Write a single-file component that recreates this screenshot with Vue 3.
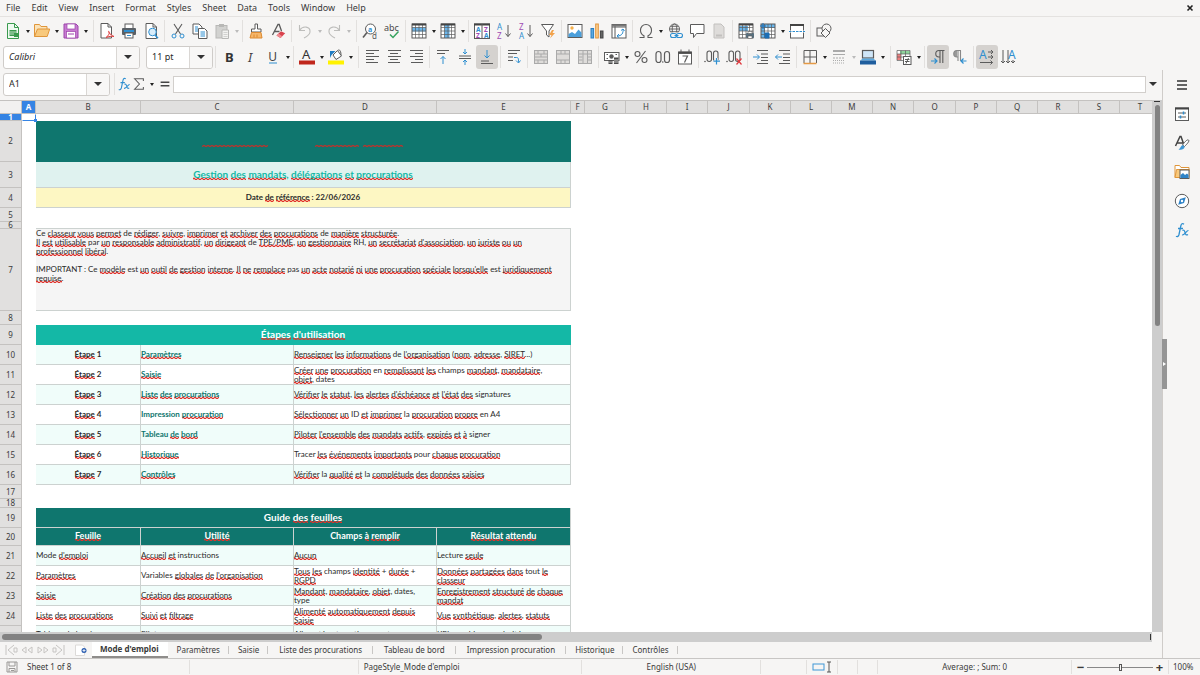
<script setup>
import { ref } from 'vue'

const menus = ['File', 'Edit', 'View', 'Insert', 'Format', 'Styles', 'Sheet', 'Data', 'Tools', 'Window', 'Help']

const G = '#5b5b5b'
const B = '#2f8fd0'
const doc = `<path d="M3 .5h7l3.500 3.500v11.500H3z" fill="#fff" stroke="${G}"/><path d="M10 .5v3.500h3.500" fill="none" stroke="${G}"/>`
const lines = (w, x) => w.map((v, i) => `<path d="M${x[i]} ${1.5 + i * 3}h${v}" stroke="${G}"/>`).join('')
const grid = (c) => `<path d="M1 4.500h14M1 8h14M1 11.500h14M4.500 1v14M8 1v14M11.500 1v14" stroke="${c}" stroke-width=".7" fill="none"/><rect x="1" y="1" width="14" height="14" fill="none" stroke="${c}"/>`

const icons = {
  new: `<path d="M2.500 .5h7l4 4v11h-11z" fill="#eefaf0" stroke="#3a9a4e"/><path d="M9.500 .5v4h4" fill="none" stroke="#3a9a4e"/><rect x="4.500" y="7" width="7" height="6" fill="#3a9a4e"/><path d="M4.500 9h7M4.500 11h7" stroke="#fff" stroke-width=".7"/><rect x="9" y="10" width="5" height="4" fill="#3a9a4e"/>`,
  open: `<path d="M.5 13.500v-12h5l1.500 2h6v3" fill="#fbe3b8" stroke="#e0963a"/><path d="M.5 13.500L3.500 6h12.200l-2.500 7.500z" fill="#f8c97c" stroke="#e0963a"/>`,
  save: `<path d="M1 1h12l2 2v12H1z" fill="#c77bd1" stroke="#9c44aa"/><rect x="4" y="1" width="8" height="5" fill="#fff" stroke="#9c44aa" stroke-width=".7"/><rect x="3.500" y="8.500" width="9" height="6.500" fill="#fff" stroke="#9c44aa" stroke-width=".7"/><path d="M5 11h6" stroke="#9c44aa"/>`,
  pdf: `<path d="M2 .5h7l3.500 3.500v11H2z" fill="#fff" stroke="${G}"/><path d="M9 .5v3.500h3.500" fill="none" stroke="${G}"/><path d="M7 14.500c3-2 4-5 3-6s-1 2 5 5c-3-.6-5 0-8 1z" fill="#fff" stroke="#dd3f3f"/>`,
  print: `<rect x="4" y="1" width="8" height="5" fill="#fff" stroke="${G}"/><rect x="1" y="5" width="14" height="7" rx="1" fill="#5a6066"/><path d="M3 8h10" stroke="${B}" stroke-width="2"/><rect x="4" y="10" width="8" height="5" fill="#fff" stroke="${G}"/><path d="M6 12.500h4" stroke="${B}"/>`,
  preview: doc + `<circle cx="9.500" cy="9" r="3.800" fill="#d9edfa" stroke="${B}"/><path d="M12 12l3 3.300" stroke="${B}" stroke-width="1.500"/>`,
  cut: `<path d="M4 1l6.500 10M12 1L5.500 11" stroke="${G}" stroke-width="1.100"/><circle cx="4" cy="13" r="2" fill="none" stroke="${B}"/><circle cx="12" cy="13" r="2" fill="none" stroke="${B}"/>`,
  copy: `<path d="M1 1h6l3 3v7H1z" fill="#fff" stroke="${G}"/><path d="M3 4h3M3 6h3M3 8h3" stroke="${B}"/><path d="M6.500 5.500h6l2.500 2.500v7.500H6.500z" fill="#fff" stroke="${G}"/><path d="M8.500 9h4.500M8.500 11h4.500M8.500 13h4.500" stroke="${B}"/>`,
  paste: `<rect x="2" y="2.500" width="11" height="12.500" fill="#d2d2d0" stroke="#b8b8b6"/><rect x="5" y="1" width="5" height="3" fill="#b8b8b6"/><path d="M8 7h6.500v8.500H8z" fill="#f2f2f0" stroke="#b8b8b6"/><path d="M9.500 9.500h4M9.500 11.500h4M9.500 13.500h4" stroke="#c4c4c2" stroke-width=".7"/>`,
  clone: `<path d="M7 1h2.500v5H13v3H3.500V6H7z" fill="#fff" stroke="${G}"/><path d="M3.500 9.500h9.500l1 5.500h-12z" fill="#f6b66a" stroke="#dc8a31"/><path d="M6 11.500v3M9 11.500v3" stroke="#dc8a31"/>`,
  clear: `<path d="M2.500 12L8 1.500h1.200L11.500 8M4.500 8.500h5" stroke="${G}" stroke-width="1.300" fill="none"/><path d="M6.500 12.500l4.500-4.200 4.200 2-4.700 4.700z" fill="#d9424d"/><path d="M6.500 12.500l2-1.900 3.700 2.700-1.700 1.700z" fill="#f08a90"/>`,
  undo: `<path d="M2.500 2v5.500H8M2.500 7.500C6 2 13.500 3.500 13 9c-.3 3-3 4.500-6 6" fill="none" stroke="#bdbdbb" stroke-width="1.100"/>`,
  redo: `<path d="M13.500 2v5.500H8M13.500 7.500C10 2 2.500 3.500 3 9c.3 3 3 4.500 6 6" fill="none" stroke="#bdbdbb" stroke-width="1.100"/>`,
  find: `<circle cx="8.500" cy="6" r="5" fill="#fff" stroke="${G}"/><path d="M5 9.500L1 14.500" stroke="${G}" stroke-width="1.600"/><text x="6" y="8.500" font-size="7" font-weight="bold" fill="${B}">a</text><text x="10" y="15.500" font-size="8" fill="${G}">d</text>`,
  spell: `<text x="0" y="7.500" font-size="9" fill="#4a4a4a">abc</text><path d="M6 11.500l3 3 5.500-6" fill="none" stroke="#36a35f" stroke-width="1.500"/>`,
  row: `<rect x="1" y="1" width="14" height="14" fill="#fff"/><rect x="1" y="4.500" width="14" height="4" fill="#6ab6ec"/>` + grid(G) + `<path d="M1 1.500h14" stroke="#444" stroke-width="2"/>`,
  col: `<rect x="1" y="1" width="14" height="14" fill="#fff"/><rect x="4.500" y="1" width="5" height="14" fill="#6ab6ec"/>` + grid(G) + `<path d="M1 1.500h14" stroke="#444" stroke-width="2"/>`,
  sort: `<rect x=".5" y="1" width="15" height="14.500" fill="#fff" stroke="${G}"/><path d="M0 1.500h16" stroke="#444" stroke-width="2"/><path d="M8 1v14.500" stroke="${G}"/><g font-size="6.500" font-weight="bold"><text x="2" y="9" fill="${B}">A</text><text x="2" y="15" fill="#a04cb3">Z</text><text x="10" y="9" fill="#a04cb3">Z</text><text x="10" y="15" fill="${B}">A</text></g>`,
  asc: `<g font-size="8"><text x="1" y="7" fill="${B}">A</text><text x="1" y="15.500" fill="#a04cb3">Z</text></g><path d="M12 2v11.500M9.500 10.500L12 13.500l2.500-3" fill="none" stroke="${G}"/>`,
  desc: `<g font-size="8"><text x="1" y="7" fill="#a04cb3">Z</text><text x="1" y="15.500" fill="${B}">A</text></g><path d="M12 2v11.500M9.500 10.500L12 13.500l2.500-3" fill="none" stroke="${G}"/>`,
  filter: `<path d="M1.500 1.500h12L9 8v6L6.500 12V8z" fill="#fff" stroke="${G}"/><path d="M12 7l-3 5h2.500L10 15.500l5-5.500h-2.500L14 7z" fill="#f2a24a"/>`,
  image: `<rect x="1" y="1.500" width="14" height="13" fill="#fff" stroke="${G}"/><circle cx="5" cy="5" r="1.700" fill="#f5b04d"/><path d="M1.500 14v-3l3.500-2 3 2 3.500-4.500 3 3V14z" fill="#4a9fdb"/>`,
  chart: `<rect x="2" y="5.500" width="2.600" height="9.500" fill="#5ba9e0" stroke="#2b7fc0"/><rect x="6.700" y="1" width="2.600" height="14" fill="#fbcf94" stroke="#e2943a"/><rect x="11.400" y="8" width="2.600" height="7" fill="#666" stroke="#444"/>`,
  pivot: `<rect x="1" y="1.500" width="14" height="13.500" fill="#fff" stroke="${G}"/><path d="M1 4h14M4 1.500V15" stroke="${G}"/><path d="M1 2.500h14" stroke="#777" stroke-width="2"/><path d="M6 13c5 0 6.500-3 6-7M6 13l2-2M6 13l2 1.500M12 6l-2 1.500M12 6l1.500 2" fill="none" stroke="${B}"/>`,
  omega: `<path d="M1.500 14.500H6v-1.700C3.500 11.500 2.500 9.500 2.500 7.200 2.500 4 4.800 1.500 8 1.500s5.500 2.500 5.500 5.700c0 2.300-1 4.300-3.500 5.600v1.700h4.500" fill="none" stroke="${G}" stroke-width="1.100"/>`,
  link: `<g fill="none" stroke="${G}" stroke-width=".9"><circle cx="7.500" cy="6" r="5"/><ellipse cx="7.500" cy="6" rx="2.300" ry="5"/><path d="M2.500 6h10M3.500 3.300h8M3.500 8.700h8"/></g><rect x="3" y="9.500" width="13" height="6" fill="#f6f5f4"/><g fill="none" stroke="${B}" stroke-width="1.100"><rect x="3.500" y="10.500" width="6" height="4" rx="2"/><rect x="9.500" y="10.500" width="6" height="4" rx="2"/><path d="M7.500 12.500h4"/></g>`,
  comment: `<path d="M1.500 1.500h13.500v9H7.500L4.500 14.500v-4h-3z" fill="#fff" stroke="${G}"/>`,
  header: `<path d="M3 1h7l3 3v11H3z" fill="#dedcda" stroke="#c2c0be"/><path d="M5 11.500h6v2H5z" fill="#c2c0be"/>`,
  printarea: `<rect x="1" y="1" width="14" height="14" fill="#fff"/><rect x="1" y="3" width="9" height="5" fill="#6ab6ec"/>` + grid(G) + `<path d="M1 1.500h14" stroke="#444" stroke-width="2"/><rect x="8" y="10" width="8" height="5" rx="1" fill="#59707f"/><rect x="10" y="8.500" width="4" height="2" fill="#fff" stroke="${G}" stroke-width=".6"/><rect x="10" y="13" width="4" height="2.500" fill="#fff" stroke="${G}" stroke-width=".6"/>`,
  freeze: `<rect x="1" y="1" width="14" height="14" fill="#fff"/><rect x="1" y="1" width="14" height="4" fill="#6ab6ec"/><rect x="1" y="1" width="4" height="14" fill="#6ab6ec"/>` + grid(G) + `<path d="M3 0v6M0 3h6M5 10h4v5H5z" stroke="#1c6fb5" fill="#1c6fb5"/>`,
  split: `<rect x="1.500" y="1.500" width="13" height="13.500" fill="#fff" stroke="${G}"/><path d="M1 2h14" stroke="#444" stroke-width="2"/><path d="M0 8.500h16" stroke="#fff" stroke-width="2"/><path d="M0 8.500h16" stroke="${B}" stroke-dasharray="2.500 1"/>`,
  shapes: `<g fill="#f6f5f4" stroke="${G}"><rect x="1" y="5" width="8" height="8"/><circle cx="10.500" cy="5.500" r="4.500"/><path d="M9.500 5.500l4.500 4.500-4.500 4.500L5 10z"/></g>`,
  bold: `<text x="4" y="12.500" font-size="13" font-weight="bold" fill="#333">B</text>`,
  italic: `<text x="5" y="12.500" font-size="13" font-style="italic" fill="#444">I</text>`,
  underline: `<text x="3.300" y="11.500" font-size="12" fill="#444">U</text><path d="M4 14h8" stroke="${B}"/>`,
  color: `<text x="3" y="10" font-size="13" fill="#333">A</text><rect x="0" y="11.500" width="16" height="4" fill="#c0271c"/>`,
  highlight: `<path d="M5 6l4.500-4.500 4 5.500L8 10.500z" fill="#fff" stroke="${G}"/><path d="M10 1.500C10 .5 13 0 13 6" fill="none" stroke="${G}"/><path d="M2 9V2h5.500L3.500 6z" fill="#1f7cc4"/><rect x="0" y="11.500" width="16" height="4" fill="#fff200"/>`,
  left: lines([13, 8, 13, 8, 12], [2, 2, 2, 2, 2]),
  center: lines([13, 8, 13, 8, 12], [2, 4, 2, 4, 2]),
  right: lines([13, 8, 13, 8, 12], [2, 7, 2, 7, 3]),
  top: `<path d="M2 1.500h12M2 4.500h8" stroke="${G}"/><path d="M8 15V7.500M5.500 10L8 7.500l2.500 2.500" fill="none" stroke="${B}"/>`,
  middle: `<path d="M2 7h12M2 9.500h12" stroke="${G}"/><path d="M8 0v5M6 3l2 2 2-2M8 16v-5M6 13l2-2 2 2" fill="none" stroke="${B}"/>`,
  bottom: `<path d="M2 12h8M2 14.500h12" stroke="${G}"/><path d="M8 1v8M5.500 6.500L8 9l2.500-2.500" fill="none" stroke="${B}"/>`,
  wrap: `<path d="M2 1.500h12M2 4.500h9M2 8h5M2 11.500h5" stroke="${G}"/><path d="M8 8.500h2.500c2 0 2 1 2 5M10 11.500l2.500 2.500 2-2.500" fill="none" stroke="${B}"/>`,
  merge1: `<rect x="1.500" y="1.500" width="13" height="13" fill="#dedcda" stroke="#aaa"/><path d="M1.500 5h13M1.500 8h13M1.500 11h13M5 1.500V5M11 1.500V5M5 11v3.500M11 11v3.500M8 5v3" stroke="#aaa"/>`,
  merge2: `<rect x="1.500" y="1.500" width="13" height="13" fill="#dedcda" stroke="#aaa"/><path d="M1.500 5h13M1.500 11h13M6 1.500V5M10 1.500V5M6 11v3.500M10 11v3.500" stroke="#aaa"/>`,
  merge3: `<rect x="1.500" y="1.500" width="13" height="13" fill="#dedcda" stroke="#aaa"/><path d="M1.500 5h13M1.500 8h4M1.500 11h4M10.500 8h4M10.500 11h4M6 1.500V15M10.500 1.500V15" stroke="#aaa"/>`,
  currency: `<rect x=".5" y="3.500" width="14.500" height="8" fill="#fff" stroke="${G}"/><circle cx="7.500" cy="7.500" r="2.200" fill="${G}"/><path d="M2.500 5.500h1.500M11.500 5.500h1.500M2.500 9.500h1.500" stroke="${G}"/><path d="M4.500 11h4v4h-4zM10 8.500h4.500V15H10z" fill="#4b4b4b"/><path d="M4.500 13h4M10 11h4.500M10 13h4.500" stroke="#fff" stroke-width=".7"/>`,
  percent: `<g fill="none" stroke="${G}" stroke-width="1.100"><circle cx="4.500" cy="5" r="2.500"/><circle cx="11.500" cy="11" r="2.500"/><path d="M12.500 2L3.500 14"/></g>`,
  number: `<g fill="none" stroke="${G}" stroke-width="1.200"><rect x="1" y="2.500" width="5" height="11" rx="2.500"/><rect x="9.500" y="2.500" width="5" height="11" rx="2.500"/></g><circle cx="7.800" cy="13" r=".8" fill="${G}"/>`,
  date: `<rect x="1.500" y="3" width="13" height="12" fill="#fff" stroke="${G}"/><path d="M1.500 3.800h13" stroke="#4a4a4a" stroke-width="2.200"/><path d="M4 .5v3M12 .5v3" stroke="${G}"/><path d="M5.500 7h5l-3 6.500" fill="none" stroke="${G}" stroke-width="1.200"/>`,
  adddec: `<g fill="none" stroke="${G}" stroke-width="1.100"><rect x="3" y="2" width="4.500" height="10.500" rx="2.200"/><rect x="9.500" y="2" width="4.500" height="10.500" rx="2.200"/></g><circle cx="1" cy="12.500" r=".8" fill="${G}"/><path d="M12.500 9v6.500M9.500 12.200h6.500" stroke="#f6f5f4" stroke-width="2.500"/><path d="M12.500 9v6.500M9.500 12.200h6.500" stroke="${B}" stroke-width="1.200"/>`,
  deldec: `<g fill="none" stroke="${G}" stroke-width="1.100"><rect x="3" y="2" width="4.500" height="10.500" rx="2.200"/><rect x="9.500" y="2" width="4.500" height="10.500" rx="2.200"/></g><circle cx="1" cy="12.500" r=".8" fill="${G}"/><path d="M10.500 9.500l5 6M15.500 9.500l-5 6" stroke="#e0393e" stroke-width="1.200"/>`,
  indent: `<path d="M4 1.500h11M8 5h7M8 8.500h7M8 11.500h7M4 14.500h11" stroke="${G}"/><path d="M0 8h6M4 5.500L6.500 8 4 10.500" fill="none" stroke="${B}"/>`,
  outdent: `<path d="M4 1.500h11M8 5h7M8 8.500h7M8 11.500h7M4 14.500h11" stroke="${G}"/><path d="M7 8H.5M3 5.500L.5 8 3 10.500" fill="none" stroke="${B}"/>`,
  borders: `<path d="M2 1.500h12.500V14M2 1.500V14M8 1.500V14M2 8h12.500" fill="none" stroke="${G}"/><path d="M1.500 14.500h13" stroke="#e59a45" stroke-width="1.500"/>`,
  style: `<path d="M2 2h12" stroke="#aaa" stroke-width="2"/><path d="M2 5.500h12" stroke="#aaa"/><path d="M2 9h12" stroke="#aaa" stroke-dasharray="2 1"/><path d="M2 11.500h12M2 14h12" stroke="#aaa" stroke-dasharray="1 1"/>`,
  bcolor: `<rect x="2.500" y="1.500" width="11" height="7.500" fill="#cfe6f8" stroke="${G}" stroke-width="1.200"/><path d="M.5 11.500l2-2h11l2 2z" fill="#5ba9e0"/><rect x="0" y="11.500" width="16" height="4" fill="#1f5e9e"/>`,
  cond: `<rect x="1" y="1.500" width="13" height="10" fill="#fff"/><rect x="4" y="2" width="10" height="3" fill="#8fd49c"/><rect x="1" y="5" width="4" height="6" fill="#ef7f7f"/><path d="M1 1.500h13v10H1zM1 5h13M1 8h13M5 1.500v10M9.500 1.500v10" fill="none" stroke="${G}" stroke-width=".7"/><rect x="7.500" y="7.500" width="7.500" height="8" fill="#fff" stroke="${G}"/><path d="M9 10.500h4.500M9 12.500h4.500M12.500 9l-2.500 5.500" stroke="${G}"/>`,
  ltr: `<path d="M14.500 1.500H9a3.200 3.200 0 000 6.500h1M10 1.500V14M12.800 1.500V14" fill="none" stroke="${G}" stroke-width="1.100"/><path d="M1 12h6M4.500 9.500L7 12l-2.500 2.500" fill="none" stroke="${B}" stroke-width="1.200"/>`,
  rtl: `<path d="M5 1.500a3.200 3.200 0 000 6.500z" fill="#999"/><path d="M9 1.500H5a3.200 3.200 0 000 6.500h1M6 1.500V12M8.500 1.500V12" fill="none" stroke="#888" stroke-width="1.100"/><path d="M14.500 12H9M11.500 9.500L9 12l2.500 2.500" fill="none" stroke="${B}" stroke-width="1.200"/>`,
  horiz: `<text x="0" y="10" font-size="12" fill="${B}">A</text><path d="M9 3h5M9 8h5M1 13.500h12.500M12 1l2 2-2 2M12 6l2 2-2 2M11.500 11.500l2 2-2 2" fill="none" stroke="${G}"/>`,
  vert: `<text x="7" y="10" font-size="12" fill="${B}">A</text><path d="M2 1v13M7 1v13M12 11v3M0 12l2 2 2-2M5 12l2 2 2-2M10 12l2 2 2-2" fill="none" stroke="${G}"/>`,
  fx: `<path d="M10 2.200C8.500 1 7.300 1.700 6.800 4L5 12.500c-.5 2-1.700 2.500-3 1.700M4 6.500h5" fill="none" stroke="${B}" stroke-width="1.300"/><path d="M8.500 8.500c1.500-1 2 0 2.500 2s1.300 3.200 3 2M14.500 8.500c-2-.5-3.500 5-6.500 4.500" fill="none" stroke="${B}" stroke-width="1.200"/>`,
  sigma: `<path d="M13 4.500V2H3l5.500 6L3 14h10v-2.500" fill="none" stroke="${G}" stroke-width="1.200"/>`,
  equal: `<path d="M3 6h10M3 10h10" stroke="#444" stroke-width="1.800"/>`,
  menu: `<path d="M3 4h10M3 8h10M3 12h10" stroke="#333" stroke-width="1.500"/>`,
  props: `<rect x="1.500" y="2" width="13" height="12.500" fill="#fff" stroke="${G}"/><path d="M1 2.500h14" stroke="#444" stroke-width="2"/><path d="M4 7h8M4 11h8" stroke="${G}"/><path d="M9.500 5.500v3M6.500 9.500v3" stroke="${B}" stroke-width="1.500"/>`,
  styles: `<path d="M1.500 11L6 1.500h1L10 10M3.300 8h5.500" fill="none" stroke="#444" stroke-width="1.500"/><path d="M14.500 5c1.500 1-2 4.500-4 6.500L8.500 10c1.500-2 4.500-6 6-5z" fill="#fff" stroke="${G}"/><path d="M8.500 10l2.200 1.800C10 15 7 15 4.500 14.500c2-.8 2-3.500 4-4.500z" fill="#3f97d6"/>`,
  gallery: `<path d="M1 13.500v-12h4.500L7 3.500h8v3" fill="#fff" stroke="#e0963a"/><path d="M1 13.500l1.500-8h12.500v8z" fill="#f8c97c" stroke="#e0963a"/><rect x="6" y="6" width="9" height="8.500" fill="#fff" stroke="${G}"/><path d="M6.500 14v-3l2.500-2 2 2 2-1.500 1.500 1.500v3z" fill="#2f83c7"/>`,
  navigator: `<circle cx="8" cy="8" r="6.700" fill="#fff" stroke="${G}"/><path d="M11.800 4.200L10 10l-5.800 1.800L6 6z" fill="#2f83c7"/><circle cx="8" cy="8" r="1.200" fill="#fff"/>`,
}

// d: with drop-down, g: greyed drop-down, p: pressed; 's' and 'w' are separators.
const bar1 = [
  ['new', 'd'], ['open', 'd'], ['save', 'd'], 'w', ['pdf'], ['print'], ['preview'], 's',
  ['cut'], ['copy'], ['paste', 'g'], 's', ['clone'], ['clear'], 's', ['undo', 'g'], ['redo', 'g'], 'w',
  ['find'], ['spell'], 's', ['row', 'd'], ['col', 'd'], 's', ['sort'], ['asc'], ['desc'], ['filter'], 's',
  ['image'], ['chart'], ['pivot'], 's', ['omega', 'd'], ['link'], ['comment'], ['header'], 's',
  ['printarea'], ['freeze', 'd'], ['split'], 's', ['shapes'],
]
const bar2 = [
  's', ['bold'], ['italic'], ['underline', 'd'], 's', ['color', 'd'], ['highlight', 'd'], 'w',
  ['left'], ['center'], ['right'], 's', ['top'], ['middle'], ['bottom', 'p'], 's', ['wrap'], 's',
  ['merge1'], ['merge2'], ['merge3'], 's', ['currency', 'd'], ['percent'], ['number'], ['date'], 's',
  ['adddec'], ['deldec'], 's', ['indent'], ['outdent'], 's', ['borders', 'd'], ['style', 'g'], ['bcolor', 'd'], 'w',
  ['cond', 'd'], 's', ['ltr', 'p'], ['rtl'], 's', ['horiz', 'p'], ['vert'],
]
const side = ['menu', 'props', 'styles', 'gallery', 'navigator', 'fx']

const cols = [
  ['A', 14], ['B', 105], ['C', 153], ['D', 143], ['E', 134], ['F', 14],
  ['G', 41], ['H', 41], ['I', 41], ['J', 42], ['K', 41], ['L', 41], ['M', 41], ['N', 41],
  ['O', 42], ['P', 41], ['Q', 41], ['R', 41], ['S', 41], ['T', 41],
]

// Braces enclose the words that the spell checker underlines.
const step = (n, name, text) => ({
  h: 20,
  cells: [
    { t: `{Étape} ${n}`, c: 'mid strong' },
    { t: name, c: 'link' },
    { t: text, span: 2 },
  ],
  tint: n % 2 === 1,
})
const guide = (tint, ...texts) => ({ h: 20, tint, cells: texts.map((t) => ({ t })) })

const rows = [
  { h: 7, cells: [] },
  { h: 41, cells: [{ t: '', c: 'title', span: 4, waves: [67, 45, 41] }] },
  { h: 26, cells: [{ t: '{Gestion} {des} {mandats}, {délégations} {et} {procurations}', c: 'subtitle', span: 4 }] },
  { h: 20, cells: [{ t: 'Date {de} {référence} : 22/06/2026', c: 'refdate', span: 4 }] },
  { h: 14, cells: [] },
  { h: 7, cells: [], under: true },
  {
    h: 82,
    cells: [{
      c: 'note', span: 4,
      t: `Ce {classeur} {vous} {permet} de {rédiger}, {suivre}, {imprimer} {et} {archiver} {des} {procurations} de {manière} {structurée}.
{Il} {est} {utilisable} par {un} {responsable} {administratif}, {un} {dirigeant} de {TPE/PME}, {un} {gestionnaire} RH, {un} {secrétariat} {d'association}, {un} {juriste} {ou} {un}
{professionnel} {libéral}.

IMPORTANT : Ce {modèle} est {un} {outil} {de} {gestion} {interne}. {Il} {ne} {remplace} pas {un} {acte} {notarié} {ni} {une} {procuration} {spéciale} {lorsqu'elle} est {juridiquement}
{requise}.`,
    }],
  },
  { h: 14, cells: [] },
  { h: 20, cells: [{ t: "{Étapes} {d'utilisation}", c: 'band teal', span: 4 }] },
  step(1, '{Paramètres}', "{Renseigner} {les} {informations} de {l'organisation} ({nom}, {adresse}, {SIRET}...)"),
  step(2, '{Saisie}', '{Créer} {une} {procuration} en {remplissant} {les} champs {mandant}, {mandataire},\n{objet}, dates'),
  step(3, '{Liste} {des} {procurations}', "{Vérifier} {le} {statut}, {les} {alertes} {d'échéance} {et} {l'état} {des} signatures"),
  step(4, 'Impression {procuration}', '{Sélectionner} {un} ID {et} {imprimer} la {procuration} {propre} en A4'),
  step(5, 'Tableau {de} {bord}', "{Piloter} {l'ensemble} {des} {mandats} {actifs}, {expirés} {et} {à} signer"),
  step(6, '{Historique}', 'Tracer {les} {événements} {importants} pour {chaque} {procuration}'),
  step(7, '{Contrôles}', '{Vérifier} la {qualité} {et} la {complétude} {des} {données} {saisies}'),
  { h: 14, cells: [] },
  { h: 9, cells: [] },
  { h: 20, cells: [{ t: 'Guide {des} {feuilles}', c: 'band dark', span: 4 }] },
  {
    h: 18,
    cells: [
      { t: '{Feuille}', c: 'head' }, { t: '{Utilité}', c: 'head' },
      { t: 'Champs {à} {remplir}', c: 'head' }, { t: '{Résultat} {attendu}', c: 'head' },
    ],
  },
  guide(true, "Mode {d'emploi}", '{Accueil} {et} instructions', '{Aucun}', 'Lecture {seule}'),
  guide(false, '{Paramètres}', "Variables {globales} {de} {l'organisation}", '{Tous} {les} champs {identité} + {durée} +\n{RGPD}', '{Données} {partagées} {dans} tout {le}\n{classeur}'),
  guide(true, '{Saisie}', '{Création} {des} {procurations}', '{Mandant}, {mandataire}, {objet}, dates,\ntype', '{Enregistrement} {structuré} {de} {chaque}\n{mandat}'),
  guide(false, '{Liste} {des} {procurations}', '{Suivi} {et} {filtrage}', '{Alimenté} {automatiquement} {depuis}\n{Saisie}', '{Vue} {synthétique}, {alertes}, {statuts}'),
  { ...guide(true, '{Tableau} {de} {bord}', '{Pilotage}', '{Alimenté} {automatiquement}', '{KPI}, {graphiques}, {priorités}'), last: true },
]

const parts = (t) => t.split(/[{}]/).map((s, i) => ({ s, bad: i % 2 === 1 }))
const wave = (w) => 'M0 2.500' + Array.from({ length: Math.floor(w / 2) }, (_, i) => `l2 ${i % 2 ? 1 : -1}`).join('')

const tabs = [
  ["Mode d'emploi", 'active'], ['Paramètres', ''], ['Saisie', ''], ['Liste des procurations', 'wide'],
  ['Tableau de bord', 'wide'], ['Impression procuration', 'wide'], ['Historique', ''], ['Contrôles', ''],
]

const font = ref('Calibri')
const size = ref('11 pt')
const cell = ref('A1')
const formula = ref('')
const zoom = ref(50)
</script>

<template>
  <div class="app">
    <nav class="menubar">
      <button v-for="m in menus" :key="m">{{ m }}</button>
      <button class="close" aria-label="Close document">
        <svg viewBox="0 0 8 8"><path d="M1.500 1.500l5 5M6.500 1.500l-5 5" stroke="#222" stroke-width="1.600" /></svg>
      </button>
    </nav>

    <div class="toolbar">
      <template v-for="(b, i) in bar1" :key="i">
        <i v-if="typeof b === 'string'" class="sep" :class="b"></i>
        <button v-else class="tool" :class="b[1]" :aria-label="b[0]">
          <svg viewBox="0 0 16 16" v-html="icons[b[0]]"></svg>
        </button>
      </template>
    </div>

    <div class="toolbar format">
      <div class="combo fontname">
        <input v-model="font" aria-label="Font name" /><button aria-label="Font list"></button>
      </div>
      <div class="combo fontsize">
        <input v-model="size" aria-label="Font size" /><button aria-label="Font size list"></button>
      </div>
      <template v-for="(b, i) in bar2" :key="i">
        <i v-if="typeof b === 'string'" class="sep" :class="b"></i>
        <button v-else class="tool" :class="b[1]" :aria-label="b[0]">
          <svg viewBox="0 0 16 16" v-html="icons[b[0]]"></svg>
        </button>
      </template>
    </div>

    <div class="body">
      <main class="work">
        <div class="formulabar">
          <div class="combo namebox">
            <input v-model="cell" aria-label="Name box" /><button aria-label="Named ranges"></button>
          </div>
          <i class="sep"></i>
          <button class="small" aria-label="Function wizard"><svg viewBox="0 0 16 16" v-html="icons.fx"></svg></button>
          <button class="small sum" aria-label="Select function"><svg viewBox="0 0 16 16" v-html="icons.sigma"></svg></button>
          <button class="small" aria-label="Formula"><svg viewBox="0 0 16 16" v-html="icons.equal"></svg></button>
          <input v-model="formula" class="formula" aria-label="Formula input" />
          <button class="expand" aria-label="Expand formula bar"></button>
        </div>

        <div class="sheetarea">
          <div class="viewport">
            <table class="sheet">
              <colgroup>
                <col class="numcol" />
                <col v-for="c in cols" :key="c[0]" :style="{ width: c[1] + 'px' }" />
              </colgroup>
              <thead>
                <tr>
                  <th></th>
                  <th v-for="c in cols" :key="c[0]" :class="{ sel: c[0] === 'A' }">{{ c[0] }}</th>
                </tr>
              </thead>
              <tbody>
                <tr v-for="(r, i) in rows" :key="i" :style="{ height: r.h + 'px' }" :class="{ tint: r.tint, under: r.under, last: r.last }">
                  <th :class="{ sel: i === 0 }"><span :style="{ height: r.h - 1 + 'px' }">{{ i + 1 }}</span></th>
                  <td :class="{ cursor: i === 0 }"></td>
                  <template v-if="r.cells.length">
                    <td v-for="(c, j) in r.cells" :key="j" class="cell" :class="c.c" :colspan="c.span || 1">
                      <div v-if="c.waves" class="waves">
                        <svg v-for="w in c.waves" :key="w" :width="w" height="4"><path :d="wave(w)" fill="none" stroke="#c0322c" stroke-width="1.200" /></svg>
                      </div>
                      <template v-for="(p, k) in parts(c.t)" :key="k"><span v-if="p.bad" class="bad">{{ p.s }}</span><template v-else>{{ p.s }}</template></template>
                    </td>
                  </template>
                  <td v-else colspan="4" class="blank"></td>
                  <td colspan="15"></td>
                </tr>
              </tbody>
            </table>
          </div>
          <div class="vscroll"><div class="thumb"></div></div>
        </div>
        <div class="hscroll"><div class="thumb"></div></div>

        <div class="tabs">
          <button class="nav" aria-label="Sheet navigation">
            <svg viewBox="0 0 60 12" fill="none" stroke="#c6c4c2">
              <path d="M1 1v10M9 1L3 6l6 5M9 4v4h3V4zM21 3l-4 3 4 3zM27 3l-4 3 4 3zM33 3l4 3-4 3zM39 3l4 3-4 3zM48 4v4h3V4zM51 1l6 5-6 5M59 1v10" />
            </svg>
          </button>
          <button class="add" aria-label="Insert sheet">
            <svg viewBox="0 0 12 12"><path d="M.5 1h7l2 2v8.500h-9z" fill="#fff" stroke="#dcdad8" /><circle cx="9" cy="6.500" r="2.500" fill="#2a5db0" /><path d="M7.500 6.500h3M9 5v3" stroke="#fff" stroke-width=".8" /></svg>
          </button>
          <button v-for="t in tabs" :key="t[0]" class="tab" :class="t[1]">{{ t[0] }}</button>
        </div>
      </main>

      <aside class="sidebar">
        <button v-for="s in side" :key="s" :aria-label="s"><svg viewBox="0 0 16 16" v-html="icons[s]"></svg></button>
        <div class="grip"><svg viewBox="0 0 5 6"><path d="M1 1l3 2-3 2z" fill="#fff" /></svg></div>
      </aside>
    </div>

    <footer class="status">
      <span><svg class="disk" viewBox="0 0 12 12" fill="none" stroke="#9a9896"><path d="M1 1h10v10H1zM3 1v4h6V1M3 11V7.500h6V11M5 9.500h3" /></svg></span>
      <span class="first">Sheet 1 of 8</span>
      <span></span>
      <span class="line pad">PageStyle_Mode d'emploi</span>
      <span class="line mid">English (USA)</span>
      <span class="line"></span>
      <span class="line modes">
        <svg viewBox="0 0 20 12" fill="none"><rect x="1" y="3" width="11" height="6" stroke="#3f97d6" /><path d="M15 1h4M15 11h4M17 1v10" stroke="#555" /></svg>
      </span>
      <span class="line"></span>
      <span class="line"></span>
      <span class="line mid">Average: ; Sum: 0</span>
      <span class="line zoom">
        <button aria-label="Zoom out">−</button>
        <input v-model="zoom" type="range" min="0" max="100" aria-label="Zoom" />
        <button aria-label="Zoom in">+</button>
      </span>
      <span class="line pct">100%</span>
    </footer>
  </div>
</template>

<style>
html, body { margin: 0; background: #f6f5f4; }
</style>

<style scoped>
.app {
  height: 100vh;
  min-height: 400px;
  display: flex;
  flex-direction: column;
  overflow: hidden;
  background: #f6f5f4;
  color: #3a3a3a;
  font: 9px/12px "Noto Sans", "Open Sans", sans-serif;
}
button, input { font: inherit; color: inherit; margin: 0; padding: 0; border: 0; background: none; min-width: 0; }
svg { display: block; overflow: visible; }
.menubar { display: flex; flex: none; gap: 11px; height: 16px; padding: 0 6px; border-bottom: 1px solid #e4e2e0; }
.close { margin-left: auto; width: 8px; }
.close svg { width: 8px; height: 8px; }

.toolbar { display: flex; flex: none; align-items: center; height: 27px; padding-left: 2px; }
.toolbar.format { height: 26px; }
.tool { position: relative; flex: none; width: 22px; height: 24px; padding: 0 3px; border-radius: 3px; }
.tool svg { width: 16px; height: 16px; }
.tool.d, .tool.g { width: 29px; padding-right: 10px; }
.tool.p { background: #d5d2cf; }
.tool.d::after, .tool.g::after {
  content: ""; position: absolute; right: 1px; top: 11px;
  border: 2px solid transparent; border-top: 3px solid #222; border-bottom: 0;
}
.tool.g::after { border-top-color: #bbb; }
.sep { flex: none; width: 1px; height: 22px; margin: 0 2px; background: #e2e0de; }
.sep.w { margin: 0 2px 0 4px; }

.combo { display: flex; flex: none; height: 23px; border: 1px solid #cfccc9; border-radius: 3px; background: #fff; overflow: hidden; box-sizing: border-box; }
.combo input { flex: 1; padding-left: 5px; color: #2a2a2a; }
.combo button { flex: none; width: 23px; border-left: 1px solid #dad7d4; background: #f8f7f6; }
.combo button::before, .expand::before {
  content: ""; display: block; width: 0; margin: 0 auto;
  border: 4px solid transparent; border-top: 4px solid #333; border-bottom: 0;
}
.fontname { width: 137px; margin-left: 1px; }
.fontname input { font-style: italic; }
.fontsize { width: 67px; margin: 0 0 0 6px; }
.fontsize + .sep { margin-left: 2px; }

.body { flex: 1; min-height: 0; display: flex; }
.work { flex: 1; min-width: 0; display: flex; flex-direction: column; }
.formulabar { display: flex; flex: none; align-items: center; height: 30px; padding: 1px 3px 3px; box-sizing: border-box; }
.namebox { width: 107px; }
.formulabar .sep { margin: 0 2px 0 4px; }
.small { flex: none; width: 14px; margin-right: 1px; }
.small svg { width: 14px; height: 14px; }
.sum { position: relative; width: 25px; }
.sum::after { content: ""; position: absolute; right: 3px; top: 6px; border: 2px solid transparent; border-top: 3px solid #222; border-bottom: 0; }
.formula { flex: 1; height: 17px; box-sizing: border-box; border: 1px solid #d2cfcc; background: #fff; }
.expand { flex: none; width: 13px; }

.sheetarea { flex: 1; min-height: 0; display: flex; }
.viewport { flex: 1; min-width: 0; overflow: hidden; background: #fff; }
.sheet { width: 0; table-layout: fixed; border-collapse: separate; border-spacing: 0; }
.numcol { width: 22px; }
th { padding: 0; box-sizing: border-box; background: #e1e0df; border-right: 1px solid #c4c2c0; border-bottom: 1px solid #c4c2c0; font-weight: 400; font-size: 8px; line-height: 12px; color: #3c3c3c; }
thead th { height: 14px; border-top: 1px solid #c4c2c0; }
thead th:first-child { background: #f2f1f0; }
th.sel { background: #3584e4; color: #fff; font-weight: 700; }
tbody th span { display: flex; align-items: center; justify-content: center; line-height: 10px; }
td { padding: 0; box-sizing: border-box; font: 8px/9px Lato, Carlito, sans-serif; color: #2b2b2b; }
.cursor { position: relative; border: 1px solid #3584e4; border-top-color: #fff; border-left-color: #fff; }
.cursor::after { content: ""; position: absolute; right: -2px; bottom: -2px; width: 3px; height: 3px; background: #3584e4; }
.cell { white-space: pre; vertical-align: middle; border-right: 1px solid #ccd2d0; border-bottom: 1px solid #ccd2d0; }
.tint .cell { background: #f0fdfa; }
.last .cell { padding-bottom: 2px; }
.under .blank { border-bottom: 1px solid #ccd2d0; }
.bad { background: url("data:image/svg+xml,%3Csvg xmlns='http://www.w3.org/2000/svg' width='4' height='3'%3E%3Cpath d='M-1 3L1 1L3 3L5 1' fill='none' stroke='%23e0332c' stroke-width='1.200'/%3E%3C/svg%3E") repeat-x left bottom; }
.cell.mid, .cell.title, .cell.subtitle, .cell.refdate, .cell.band, .cell.head { text-align: center; }
.strong, .link, .refdate, .subtitle, .band, .head { font-weight: 700; }
.link { color: #0f766e; }
.title { background: #0f766e; border-color: #0f766e; }
.waves { display: flex; justify-content: center; padding-top: 10px; }
.waves svg + svg { margin-left: 46px; }
.waves svg + svg + svg { margin-left: 3px; }
.subtitle { background: #dff2ef; color: #14b8a6; font-size: 10px; line-height: 12px; }
.refdate { background: #fdf7c3; }
.note { background: #f5f5f5; }
.cell.note { vertical-align: top; }
.band, .head { color: #fff; }
.band { font-size: 10px; line-height: 12px; }
.teal { background: #14b8a6; border-color: #14b8a6; }
.dark, .head { background: #0f766e; }
.head { font-size: 9px; }
.subtitle, .band, .head { padding-bottom: 2px; }

.vscroll { position: relative; flex: none; width: 10px; background: #cdcdcd; box-sizing: border-box; padding: 5px 2px 0 3px; }
.vscroll::before { content: ""; position: absolute; left: 2px; top: 1px; width: 6px; height: 1px; background: #333; }
.vscroll .thumb { height: 42%; border-radius: 3px; background: #828282; }
.hscroll { position: relative; flex: none; height: 10px; margin-right: 10px; background: #cdcdcd; box-sizing: border-box; padding: 2px; }
.hscroll::before { content: ""; position: absolute; right: 1px; top: 2px; width: 1px; height: 6px; background: #333; }
.hscroll .thumb { width: 47%; height: 6px; border-radius: 3px; background: #828282; }

.tabs { display: flex; flex: none; height: 16px; font-size: 8px; line-height: 14px; }
.tab { padding: 0 9px; white-space: nowrap; position: relative; }
.tab::after { content: ""; position: absolute; right: 0; top: 4px; height: 8px; border-right: 1px solid #c8c6c4; }
.tab.wide { padding: 0 11px; }
.tab.active { padding-left: 8px; background: #fff; font-weight: 700; border-bottom: 2px solid #8f8d8b; }
.tab.active::after { display: none; }
.nav { width: 68px; padding: 0 3px 0 5px; }
.nav svg { width: 60px; height: 12px; }
.add { width: 24px; padding-left: 7px; }
.add svg { width: 12px; height: 12px; }

.sidebar { position: relative; flex: none; width: 38px; box-sizing: border-box; padding-top: 7px; border-left: 1px solid #cfccc9; display: flex; flex-direction: column; align-items: center; gap: 13px; }
.sidebar button svg { width: 16px; height: 16px; }
.grip { position: absolute; left: -1px; top: 269px; width: 5px; height: 50px; background: #959595; display: flex; align-items: center; }
.grip svg { width: 5px; height: 6px; }

.status { flex: none; height: 17px; box-sizing: border-box; border-top: 1px solid #c8c6c4; display: grid; grid-template-columns: 22px 168fr 168fr 224fr 179fr 46px 31px 20px 20px 194fr 97px 32px; align-items: center; font-size: 8px; line-height: 14px; }
.status > span { height: 14px; white-space: nowrap; }
.line { border-left: 1px solid #e2e0de; }
.first { padding-left: 5px; border-right: 1px solid #e2e0de; }
.pad { padding-left: 5px; }
.status .mid { text-align: center; }
.disk { width: 12px; height: 12px; margin: 1px 0 0 6px; }
.modes svg { width: 20px; height: 12px; margin: 1px 0 0 5px; }
.zoom { display: flex; align-items: center; gap: 2px; padding: 0 4px; font-size: 13px; font-weight: 700; }
.zoom button { width: 9px; }
.zoom input { flex: 1; height: 12px; appearance: none; }
.zoom input::-webkit-slider-runnable-track { height: 1px; background: #888; }
.zoom input::-webkit-slider-thumb { appearance: none; width: 3px; height: 7px; margin-top: -3px; box-sizing: border-box; border: 1px solid #555; background: #f6f5f4; }
.pct { padding-left: 4px; }
</style>
